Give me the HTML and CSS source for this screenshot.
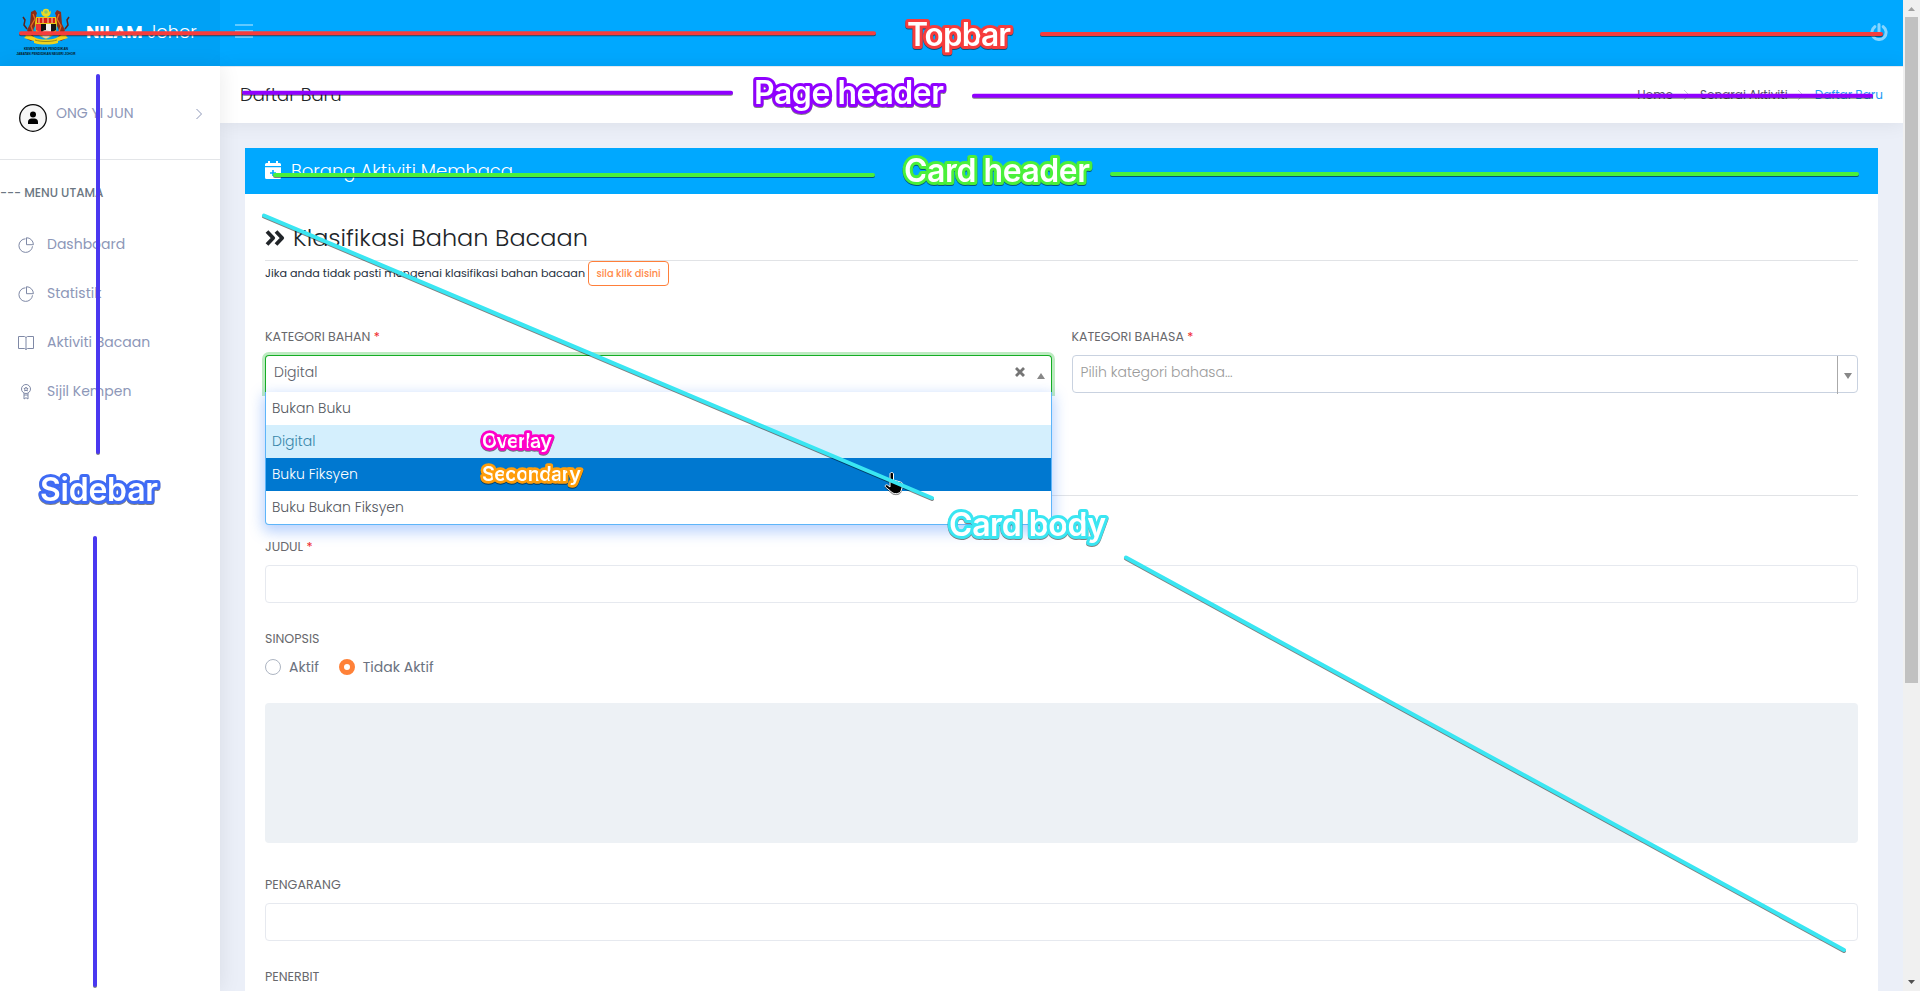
FILE: index.html
```html
<!DOCTYPE html>
<html lang="ms">
<head>
<meta charset="utf-8">
<title>NILAM Johor</title>
<link rel="stylesheet" href="styles.css">
</head>
<body>
<div class="window">
  <div class="app">
    <header class="topbar">
      <div class="brand">
        <svg class="crest" width="64" height="52" viewBox="-1 0 64 52">
          <path d="M35.500 3.500a4.800 4.800 0 1 1-9 0 5 5 0 0 0 9 0z" fill="#ecd91e"/><circle cx="31" cy="5" r="3.300" fill="#e6dc2c"/><circle cx="31" cy="5" r="1.800" fill="#8bc860"/>
          <path d="M16 5l4-2 2 3-1 3 2 4-4 8-2 6 3 5-4 2-4-2 2-5-2-4 3-6z" fill="#8b2b17"/>
          <path d="M46 5l-4-2-2 3 1 3-2 4 4 8 2 6-3 5 4 2 4-2-2-5 2-4-3-6z" fill="#8b2b17"/>
          <path d="M12 22l-3-4 1-5-2-3M50 22l3-4-1-5 2-3" fill="none" stroke="#5c2119" stroke-width="1.500"/>
          <path d="M18 7l2 5-4 7 2 6M44 7l-2 5 4 7-2 6" fill="none" stroke="#e36a22" stroke-width="1.300"/>
          <path d="M21 10h20l1 6-1 9c-3 4-6 5-10 7-4-2-7-3-10-7l-1-9z" fill="#e9c817"/>
          <path d="M22 11h18v5H22z" fill="#d82018"/><path d="M24 11v5M28 11v5M33 11v5M37 11v5" stroke="#f4e3a0"/>
          <path d="M21 17h5v9l-5-3z" fill="#e33"/><path d="M26 17h5v8h-5z" fill="#111"/><path d="M31 17h5v8h-5z" fill="#eee"/><path d="M36 17h5v6l-5 3z" fill="#151515"/>
          <circle cx="31" cy="27" r="4" fill="#d9d4c8"/>
          <path d="M8 25c4 0 6 2 9 4l4 2c5 2 15 2 20 0l4-2c3-2 5-4 9-4l-3 4 2 2-10 3v2c-7 2-17 2-24 0v-2L9 31l2-2z" fill="#f0d31c"/>
          <path d="M20 33c6 2 16 2 22 0" fill="none" stroke="#9a8a16"/>
          <text class="crest-text" x="31" y="43" text-anchor="middle" textLength="44" lengthAdjust="spacingAndGlyphs">KEMENTERIAN PENDIDIKAN</text>
          <text class="crest-text" x="31" y="47.700" text-anchor="middle" textLength="59" lengthAdjust="spacingAndGlyphs">JABATAN PENDIDIKAN NEGERI JOHOR</text>
        </svg>
        <span class="brand-name"><b>NILAM</b> Johor</span>
      </div>
      <div class="topnav">
        <svg width="18" height="14" viewBox="0 0 18 14" stroke="#fff" stroke-opacity=".5" stroke-width="1.6"><path d="M0 1h18M0 7h18M0 13h18"/></svg>
        <svg width="18" height="18" viewBox="0 0 18 18" fill="none" stroke="#fff" stroke-opacity=".52" stroke-width="3" stroke-linecap="round"><path d="M4.800 3.700a7.100 7.100 0 1 0 8.400 0M9 1.500v7"/></svg>
      </div>
    </header>
    <div class="columns">
      <aside class="sidebar">
        <div class="user">
          <svg width="28" height="28" viewBox="0 0 28 28"><circle cx="14" cy="14" r="13.300" fill="#f6f6f6" stroke="#0a0a0a" stroke-width="1.300"/><circle cx="14" cy="10.500" r="3"/><path d="M9 20v-2c0-2 1.500-3.500 3.500-3.500h3c2 0 3.500 1.500 3.500 3.500v2z"/></svg>
          <span class="user-name">ONG YI JUN</span>
          <svg class="chev" width="8" height="12" viewBox="0 0 8 12" fill="none" stroke="#8d97b8"><path d="M1.500 1l5 5-5 5"/></svg>
        </div>
        <div class="menu-title">--- MENU UTAMA</div>
        <nav class="menu">
          <a><svg width="16" height="16" viewBox="0 0 16 16" fill="none" stroke="#7f89a6"><path d="M7.500 1.800a6.800 6.800 0 1 0 7 7.500M8.500.7v7h6.900A7 7 0 0 0 8.500.7z"/></svg>Dashboard</a>
          <a><svg width="16" height="16" viewBox="0 0 16 16" fill="none" stroke="#7f89a6"><path d="M7.500 1.800a6.800 6.800 0 1 0 7 7.500M8.500.7v7h6.900A7 7 0 0 0 8.500.7z"/></svg>Statistik</a>
          <a><svg width="16" height="16" viewBox="0 0 16 16" fill="none" stroke="#7f89a6"><path d="M.5 1.500h6L8 2.500l1.500-1h6v12h-6L8 14.500l-1.500-1h-6zM8 2.500v12"/></svg>Aktiviti Bacaan</a>
          <a><svg width="16" height="16" viewBox="0 0 16 16" fill="none" stroke="#7f89a6"><circle cx="8" cy="5" r="4.500"/><path d="M8 3l.6 1.400 1.500.1-1.100 1 .3 1.500L8 6.200 6.700 7 7 5.500l-1.100-1 1.500-.1zM6 9v6l2-1.300 2 1.300V9M6 11h4"/></svg>Sijil Kempen</a>
        </nav>
      </aside>
      <main class="main">
        <div class="page-header">
          <h1>Daftar Baru</h1>
          <div class="crumbs"><span>Home</span><svg width="6" height="12" viewBox="0 0 6 12" fill="none" stroke="#c9ced6"><path d="M0 1l5 5-5 5"/></svg><span>Senarai Aktiviti</span><svg width="6" height="12" viewBox="0 0 6 12" fill="none" stroke="#c9ced6"><path d="M0 1l5 5-5 5"/></svg><span class="current">Daftar Baru</span></div>
        </div>
        <div class="content">
          <section class="card">
            <div class="card-header">
              <svg width="16" height="18" viewBox="0 0 16 18" fill="#fff"><path d="M3 0h2v2h6V0h2v2h1.500A1.500 1.500 0 0 1 16 3.500V5H0V3.500A1.500 1.500 0 0 1 1.500 2H3z"/><path fill-rule="evenodd" d="M0 6.300h16v10.200a1.500 1.500 0 0 1-1.500 1.500h-13A1.500 1.500 0 0 1 0 16.500zM7.200 9v2.300H5v1.500h2.200V15h1.600v-2.200H11v-1.500H8.800V9z"/></svg>
              <span>Borang Aktiviti Membaca</span>
            </div>
            <div class="card-body">
              <div class="section-title">
                <svg width="20" height="16" viewBox="0 0 20 16" fill="none" stroke="#212529" stroke-width="3.800" stroke-linejoin="round"><path d="M2 1.500L8.200 8 2 14.500M11 1.500L17.200 8 11 14.500"/></svg>
                <h2>Klasifikasi Bahan Bacaan</h2>
              </div>
              <div class="hint"><span>Jika anda tidak pasti mengenai klasifikasi bahan bacaan</span><button class="outline">sila klik disini</button></div>
              <div class="row">
                <div class="field">
                  <label class="label">KATEGORI BAHAN <i>*</i></label>
                  <div class="select open">
                    <span class="value">Digital</span>
                    <svg class="clear" width="10" height="10" viewBox="0 0 10 10" stroke="#757575" stroke-width="2.800"><path d="M1 1l8 8M9 1L1 9"/></svg>
                    <svg class="arrow" width="8" height="6" viewBox="0 0 8 6" fill="#888"><path d="M0 6l4-6 4 6z"/></svg>
                    <div class="dropdown">
                      <div class="option">Bukan Buku</div>
                      <div class="option selected">Digital</div>
                      <div class="option hover">Buku Fiksyen</div>
                      <div class="option">Buku Bukan Fiksyen</div>
                    </div>
                  </div>
                </div>
                <div class="field">
                  <label class="label">KATEGORI BAHASA <i>*</i></label>
                  <div class="select">
                    <span class="placeholder">Pilih kategori bahasa...</span>
                    <span class="toggle"><svg width="8" height="6" viewBox="0 0 8 6" fill="#888"><path d="M0 0h8L4 6z"/></svg></span>
                  </div>
                </div>
              </div>
              <hr class="rule">
              <label class="label judul">JUDUL <i>*</i></label>
              <div class="input"></div>
              <label class="label sinopsis">SINOPSIS</label>
              <div class="radios">
                <span class="radio"></span><span>Aktif</span>
                <span class="radio on"></span><span>Tidak Aktif</span>
              </div>
              <div class="textarea"></div>
              <label class="label pengarang">PENGARANG</label>
              <div class="input"></div>
              <label class="label penerbit">PENERBIT</label>
            </div>
          </section>
        </div>
      </main>
    </div>
  </div>
  <div class="scrollbar">
    <svg width="7" height="4" viewBox="0 0 7 4" fill="#a0a0a0"><path d="M0 4l3.500-4L7 4z"/></svg>
    <div class="thumb"></div>
    <svg class="down" width="7" height="4" viewBox="0 0 7 4" fill="#505050"><path d="M0 0h7L3.500 4z"/></svg>
  </div>
  <svg class="notes" width="1920" height="991" viewBox="0 0 1920 991">
    <g transform="translate(885.500 472)"><path d="M4.500 2c0-2 3.500-2 3.500 0v6l7 2c2 .5 2.500 1.500 2 4l-1.500 5c-1 3-8 4-10.500 0L0 15c-1-2 1-3 2.500-1.500l2 1.500z" fill="#000" stroke="#fff"/></g>
    <g class="lines">
      <path stroke="#f63c3c" d="M21 33.200H874M1042 33.900H1881"/>
      <path stroke="#9000ff" d="M244 92.800H731M974 95.800H1871"/>
      <path stroke="#4af03a" d="M275 175H873M1112 174H1857"/>
      <path stroke="#4a38f0" d="M98 76V452M95 538V985"/>
      <path stroke="#3ae6f2" d="M264 215.500L932 498M1126 557.500L1844 950"/>
    </g>
    <g class="tags">
      <text x="907" y="46" textLength="104" stroke="#f63c3c">Topbar</text>
      <text x="754" y="104" textLength="190" stroke="#9000ff">Page header</text>
      <text x="904" y="182" textLength="186" stroke="#4af03a">Card header</text>
      <text x="40" y="501" textLength="118" stroke="#3f6bf5">Sidebar</text>
      <text x="949" y="535.500" textLength="157" stroke="#3ae6f2">Card body</text>
      <text class="small" x="482" y="448" textLength="70" stroke="#ff00c8">Overlay</text>
      <text class="small" x="482" y="480.500" textLength="99" stroke="#ff9d0a">Secondary</text>
    </g>
  </svg>
</div>
</body>
</html>
```
FILE: styles.css
```css
* { box-sizing: border-box; }
body { margin: 0; font-family: Poppins, Inter, "Open Sans", sans-serif; font-size: 14px; font-weight: 300; color: #212529; }
svg { display: block; flex: none; }
.window { position: relative; display: flex; width: 1920px; height: 991px; overflow: hidden; background: #fff; }
.app { display: flex; flex-direction: column; width: 1903px; }

.topbar { display: flex; flex: none; height: 66px; background: #00a8ff; }
.brand { display: flex; width: 220px; padding: 7px 0 0 14px; background: #00a1f5; color: #fff; }
.brand-name { margin: 11px 0 0 8px; font-size: 17.8px; line-height: 28px; white-space: nowrap; }
.brand-name b { font-weight: 700; }
.crest { overflow: visible; }
.crest-text { font: 700 4px "Liberation Sans", sans-serif; fill: #0a1420; }
.topnav { display: flex; flex: 1; justify-content: space-between; align-items: flex-start; padding: 23px 15px 0 15px; }
.topnav svg:first-child { margin-top: 1px; }

.columns { display: flex; flex: 1; min-height: 0; }
.sidebar { position: relative; z-index: 1; width: 220px; flex: none; background: #fff; box-shadow: 1px 0 20px rgba(0,0,0,.08); font-weight: 400; }
.user { display: flex; height: 94px; padding: 38px 17px 0 19px; border-bottom: 1px solid #e3e5e8; }
.user-name { flex: 1; margin-left: 9px; line-height: 18px; color: #8d97b8; }
.chev { margin-top: 4px; }
.menu-title { margin-top: 24px; font-size: 12px; font-weight: 500; line-height: 18px; color: #6b7682; white-space: nowrap; }
.menu { display: flex; flex-direction: column; margin-top: 18px; }
.menu a { display: flex; align-items: center; gap: 13px; height: 49px; padding-left: 18px; color: #8d97b8; }

.main { display: flex; flex: 1; flex-direction: column; background: #ebeff8; }
.page-header { display: flex; flex: none; justify-content: space-between; align-items: flex-start; height: 57px; padding: 16px 20px 0; border-top: 1px solid #e4e9f0; background: #fff; box-shadow: 1px 0 20px rgba(0,0,0,.08); }
h1 { margin: 0; font-size: 18px; font-weight: 300; line-height: 24px; }
.crumbs { display: flex; align-items: center; gap: 10.5px; line-height: 24px; font-size: 12px; font-weight: 400; color: #4f5660; }
.current { color: #1e9bf5; }
.content { flex: 1; min-height: 0; padding: 25px 25px 0; }
.card { height: 843px; background: #fff; }
.card-header { display: flex; gap: 10px; height: 46px; padding: 13px 20px; background: #00a8ff; color: #fff; font-size: 18px; line-height: 20px; }
.card-body { display: flex; flex-direction: column; padding: 22px 20px 0; }
.section-title { display: flex; align-items: center; gap: 8px; height: 45px; border-bottom: 1px solid #e1e3e6; }
h2 { margin: 0; font-size: 24px; font-weight: 300; line-height: 36px; }
.hint { display: flex; gap: 3px; height: 65px; font-size: 11.2px; font-weight: 400; line-height: 25px; color: #263040; }
.outline { width: 81px; height: 25px; padding: 0; border: 1px solid #ff7f3a; border-radius: 4px; background: #fff; color: #ff8a4a; font: 500 9.8px Poppins, Inter, sans-serif; line-height: 20px; }
.row { display: flex; gap: 20px; height: 169px; }
.field { flex: 1; }
.label { display: block; flex: none; height: 29px; font-size: 12.6px; font-weight: 400; line-height: 22px; color: #68686c; }
.label i { color: #f01e28; font-style: normal; }
.select { position: relative; display: flex; height: 38px; padding-left: 8px; border: 1px solid #c9d2e0; border-radius: 4px; background: #fff; line-height: 33px; }
.open { border-color: #14ad24; border-bottom-color: #fff; border-radius: 4px 4px 0 0; box-shadow: 0 0 0 3px #bdebc1; }
.value { flex: 1; color: #5c6068; }
.placeholder { flex: 1; color: #9a9a9a; }
.clear { margin: 11px 12px 0 0; }
.arrow { margin: 17px 6px 0 0; }
.toggle { display: flex; justify-content: center; width: 20px; height: 38px; padding-top: 17px; border-left: 1px solid #aaa; }
.dropdown { position: absolute; z-index: 2; top: 36px; left: -1px; right: -1px; border: 1px solid #5eb5f9; border-top: 0; border-radius: 0 0 4px 4px; background: #fff; box-shadow: 0 5px 14px 2px rgba(60,130,250,.36); clip-path: inset(-12px -24px -24px -24px); }
.option { height: 33px; padding-left: 6px; line-height: 33px; color: #555961; }
.selected { background: #d4effd; color: #3685a8; }
.hover { background: #0078d0; color: #fff; }
.rule { width: 100%; height: 1px; margin: 0; border: 0; background: #e1e3e6; }
.input { flex: none; height: 38px; border: 1px solid #e6e9ef; border-radius: 4px; background: #fff; }
.judul { margin-top: 40px; }
.sinopsis { margin-top: 25px; height: 30px; }
.radios { display: flex; align-items: center; height: 18px; font-weight: 400; color: #6b7280; }
.radio { width: 16px; height: 16px; margin-right: 8px; border: 1px solid #adb5c2; border-radius: 50%; }
.radio.on { margin-left: 20px; border: 5px solid #ff8138; }
.textarea { flex: none; height: 140px; margin-top: 27px; border-radius: 4px; background: #edf1f5; }
.pengarang { margin-top: 31px; }
.penerbit { margin-top: 25px; }

.scrollbar { display: flex; flex-direction: column; align-items: center; width: 17px; background: #f0f0f0; padding-top: 7px; }
.thumb { width: 13px; height: 666px; margin-top: 6px; background: #c1c1c1; }
.down { margin: auto 0 7px; }

.notes { position: absolute; z-index: 5; left: 0; top: 0; filter: drop-shadow(0 1px 0 rgba(0,0,0,.5)); }
.lines { fill: none; stroke-width: 4; stroke-linecap: round; }
.tags { font: 600 32px Inter, sans-serif; fill: #fff; stroke-width: 6; stroke-linejoin: round; paint-order: stroke; }
.small { font-size: 20px; stroke-width: 5.500; }
```
